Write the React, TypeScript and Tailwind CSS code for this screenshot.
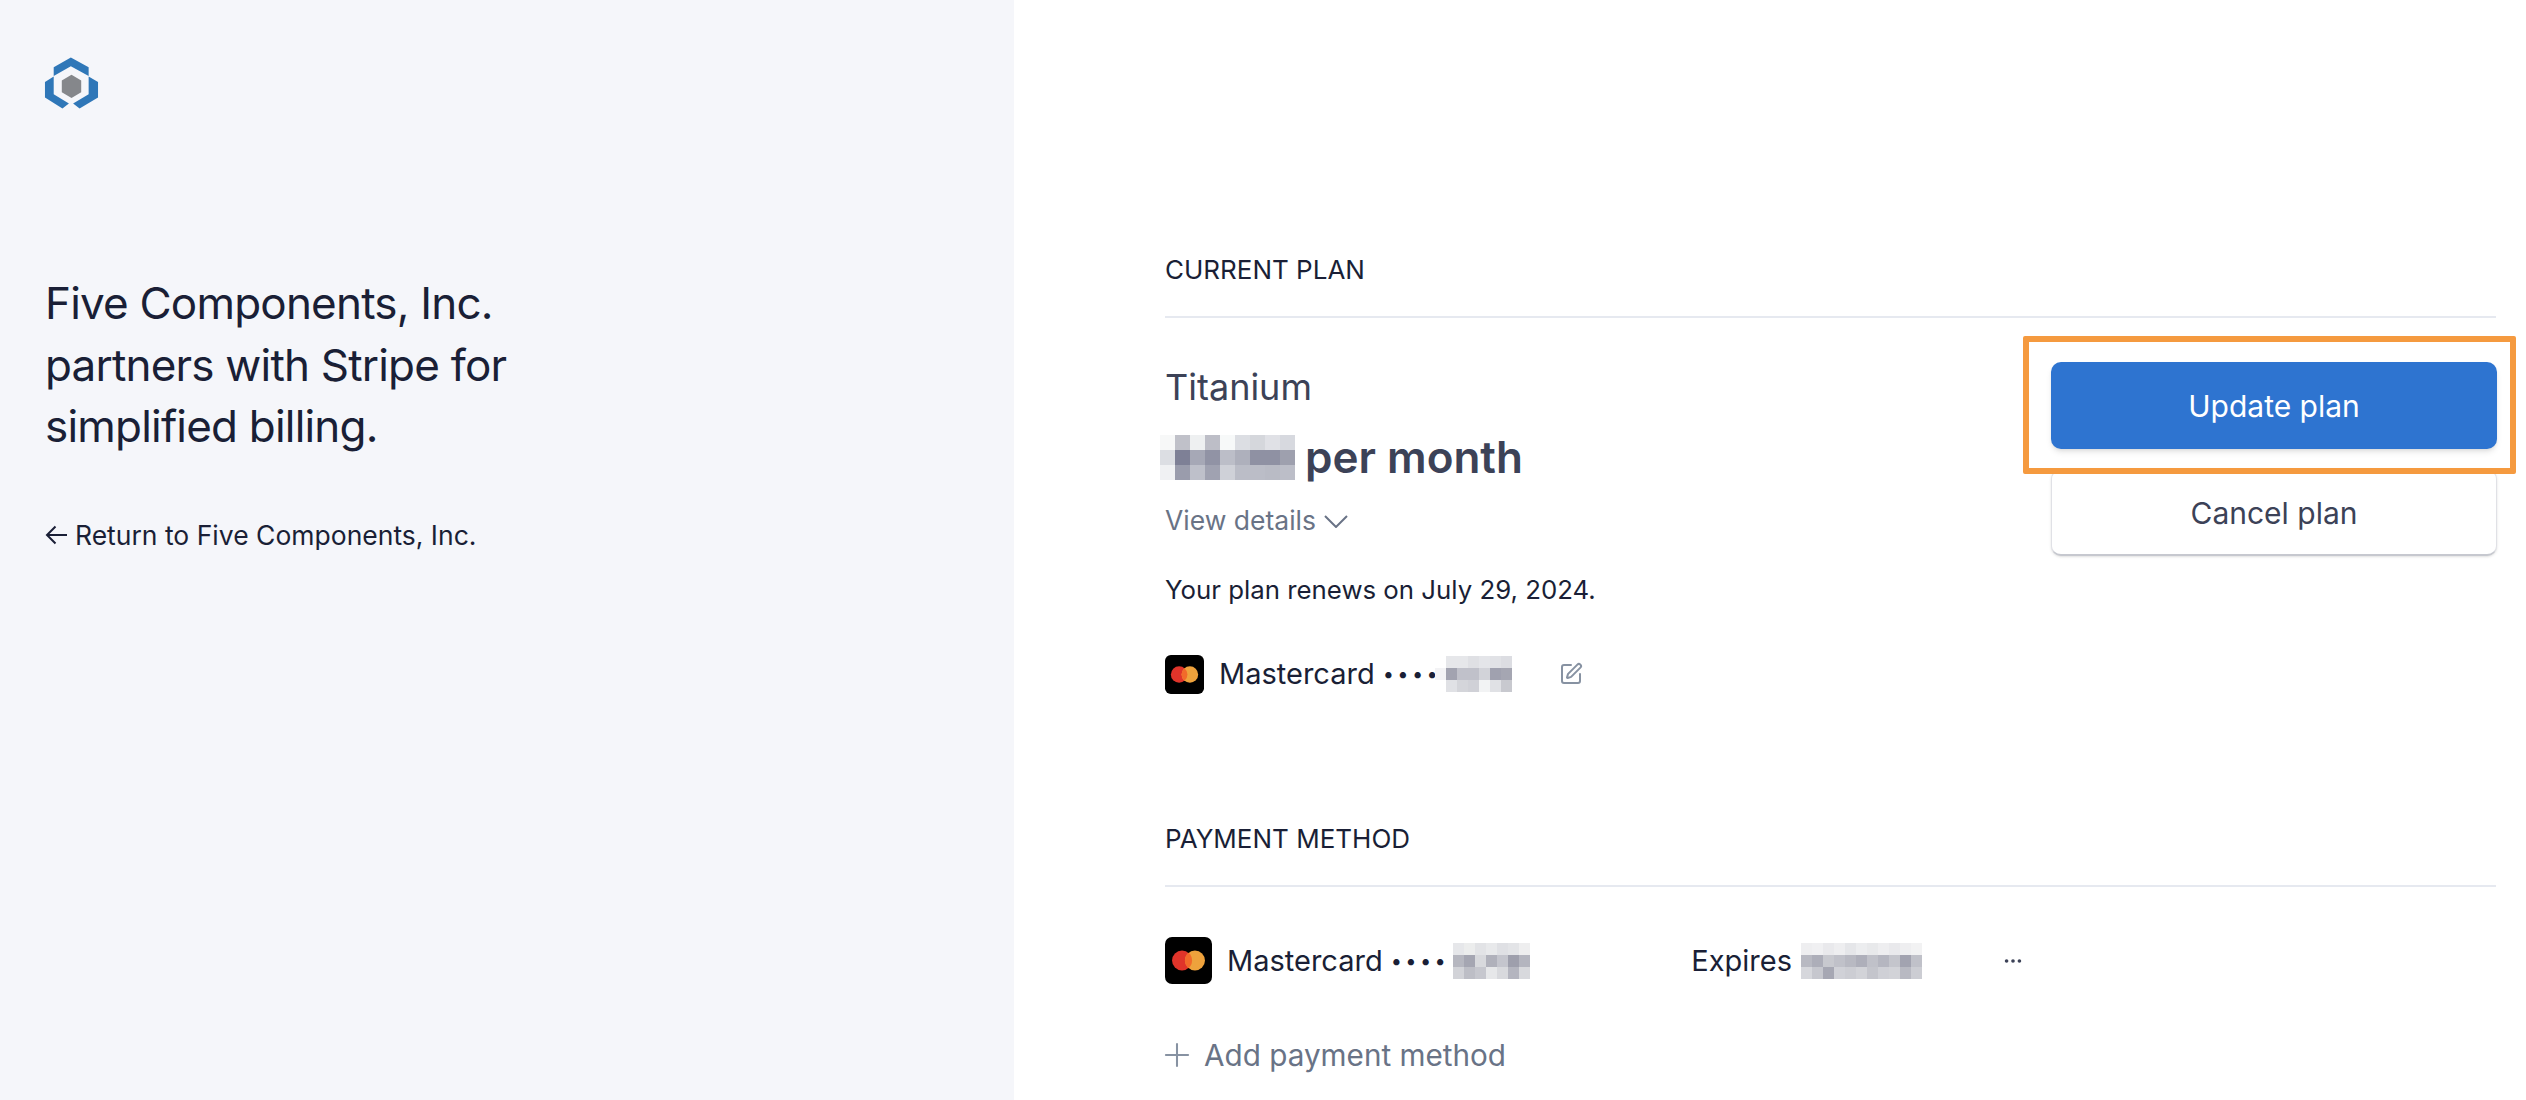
import { Ellipsis, Plus, SquarePen } from "lucide-react";

const font = "font-['Inter','Liberation_Sans',sans-serif]";

const priceBlur = [
  ["#f7f8f8", "#c0c1c9", "#eef0f1", "#bdbec7", "#f7f9f9", "#dcdee3", "#d5d7dc", "#e0e1e6", "#d7d9df"],
  ["#dcdee3", "#7e8096", "#a6a8b6", "#9193a5", "#bcbec8", "#aeb0bc", "#8f91a3", "#8f91a3", "#9ea0ae"],
  ["#f0f1f3", "#9a9cac", "#bec0ca", "#a0a2b1", "#cfd1d8", "#bbbdc7", "#bbbdc7", "#b9bbc5", "#bcbec8"],
];

const planCardBlur = [
  ["#ffffff", "#e6e7ea", "#e6e7ea", "#dfe0e4", "#e4e5e9", "#e1e2e6", "#dcdde2"],
  ["#f3f3f5", "#a2a3b0", "#c0c1ca", "#c0c1ca", "#d2d3d9", "#a0a1af", "#a5a6b2"],
  ["#ffffff", "#e0e1e5", "#d4d5da", "#d0d1d7", "#f2f3f4", "#e0e1e5", "#c8c9cf"],
];

const methodCardBlur = [
  ["#e6e7ea", "#eceded", "#e2e3e6", "#e8e9eb", "#dfe0e4", "#e3e4e7", "#eeeeef"],
  ["#b6b7c0", "#a5a6b2", "#d8d9dd", "#b0b1bb", "#c4c5cd", "#9e9fac", "#b4b5bf"],
  ["#d2d3d8", "#bdbec6", "#c6c7ce", "#e6e7e9", "#d8d9dd", "#b4b5bf", "#d8d9dd"],
];

const expiresBlur = [
  ["#eeeef0", "#f0f0f2", "#e9e9ec", "#eeeef0", "#e5e6e9", "#ecedef", "#e8e9eb", "#eeeef0", "#e9e9ec", "#eeeef0", "#f2f2f3"],
  ["#b8b9c2", "#adaeb9", "#c8c9cf", "#c0c1c9", "#b8b9c2", "#aeafba", "#c0c1c9", "#b5b6c0", "#c4c5cc", "#a2a3b0", "#c0c1c9"],
  ["#d6d7dc", "#c6c7ce", "#a6a7b3", "#d0d1d7", "#cccdd3", "#d2d3d8", "#c4c5cc", "#cfd0d6", "#d2d3d8", "#b8b9c2", "#cccdd3"],
];

const Mosaic = ({ rows, cell, height, className }: { rows: string[][]; cell: number; height: number; className?: string }) => (
  <div className={`flex flex-col shrink-0 ${className ?? ""}`}>
    {rows.map((row, r) => (
      <div className="flex" key={r}>
        {row.map((color, c) => (
          <div key={c} style={{ width: cell, height, backgroundColor: color }} />
        ))}
      </div>
    ))}
  </div>
);

const Mastercard = ({ className }: { className: string }) => (
  <svg className={`shrink-0 ${className}`} viewBox="0 0 40 40">
    <rect width="40" height="40" rx="6" fill="#000" />
    <circle cx="14.5" cy="20" r="8.5" fill="#e0342a" />
    <circle cx="25.5" cy="20" r="8.5" fill="#eea23c" />
    <path d="M20 13.5a8.5 8.5 0 0 1 0 13a8.5 8.5 0 0 1 0-13z" fill="#f26a2a" />
  </svg>
);

const Logo = () => (
  <svg className="w-[55px] h-[55px]" viewBox="70 50 170 170">
    <path d="M100 85L153 55L208 85V112L153 82L100 112Z" fill="#2f77b8" />
    <path d="M73 130L100 113V168L147 197L127 212L73 178Z" fill="#2f77b8" />
    <path d="M237 130L208 113V168L160 197L180 212L237 178Z" fill="#2f77b8" />
    <path d="M155 108L185 126V162L155 180L125 162V126Z" fill="#85878b" />
  </svg>
);

const SectionTitle = ({ children }: { children: string }) => (
  <div className="h-[66px] border-b-2 border-[#e6e9f0] text-[26px] leading-[36px] text-[#1a1f36]">{children}</div>
);

const CardNumberDots = () => (
  <span className="ml-[8px] -mr-[4px] text-[20px] leading-[40px] tracking-[3.4px] text-[#1a1f36]">••••</span>
);

export default function App() {
  return (
    <div className={`flex w-full h-[1100px] overflow-hidden bg-white ${font}`}>
      <aside className="w-[1014px] shrink-0 bg-[#f5f6fa] pl-[45px] pt-[56px] text-[#1a1f36]">
        <div className="-ml-[1px]">
          <Logo />
        </div>
        <h1 className="mt-[162px] w-[540px] text-[44px] leading-[61.5px] tracking-[-0.8px] font-normal">
          Five Components, Inc. partners with Stripe for simplified billing.
        </h1>
        <a className="mt-[59px] flex items-center gap-[8px] text-[26.5px] leading-[36px]">
          <svg className="w-[22px] h-[20px]" viewBox="0 0 22 20" fill="none" stroke="currentColor" strokeWidth="2">
            <path d="M22 10H2M10.5 1.5L2 10l8.5 8.5" />
          </svg>
          Return to Five Components, Inc.
        </a>
      </aside>

      <main className="flex-1 pl-[151px] pr-[30px] pt-[252px]">
        <SectionTitle>CURRENT PLAN</SectionTitle>

        <div className="flex justify-between h-[503px]">
          <div className="pt-[47px]">
            <div className="text-[36px] leading-[44px] text-[#3c4257]">Titanium</div>
            <div className="mt-[21px] flex items-center -ml-[5px] h-[54px]">
              <Mosaic rows={priceBlur} cell={15} height={15} />
              <span className="ml-[10px] text-[44px] leading-[54px] font-semibold text-[#3c4257]">per month</span>
            </div>
            <div className="mt-[18px] flex items-center gap-[8px] text-[26.5px] leading-[36px] text-[#697386]">
              View details
              <svg className="w-[24px] h-[13px] mt-[2px]" viewBox="0 0 24 13" fill="none" stroke="currentColor" strokeWidth="2">
                <path d="M1 1l11 11L23 1" />
              </svg>
            </div>
            <div className="mt-[34px] text-[25.8px] leading-[36px] text-[#1a1f36]">Your plan renews on July 29, 2024.</div>
            <div className="mt-[46px] flex items-center h-[40px]">
              <Mastercard className="w-[39px] h-[39px]" />
              <span className="ml-[15px] text-[29px] leading-[40px] text-[#1a1f36]">Mastercard</span>
              <CardNumberDots />
              <Mosaic rows={planCardBlur} cell={11} height={12} className="-ml-[2px]" />
              <SquarePen className="ml-[47px] w-[24px] h-[24px] text-[#8792a2]" strokeWidth={2} />
            </div>
          </div>

          <div className="w-[446px] -mr-[1px] pt-[44px] flex flex-col gap-[20px] text-[30px]">
            <div className="relative">
              <button className="w-full h-[87px] pt-[2px] rounded-[10px] bg-[#2e74d0] text-white shadow-md">Update plan</button>
              <div className="absolute -left-[28px] -right-[19px] -top-[26px] -bottom-[25px] border-[6px] rounded-[2px] border-[#f59a3f]" />
            </div>
            <button className="h-[87px] pt-[2px] rounded-[10px] bg-white text-[#3c4257] border border-[#e0e1e6] border-b-2 border-b-[#c6c8cf] shadow-sm">
              Cancel plan
            </button>
          </div>
        </div>

        <SectionTitle>PAYMENT METHOD</SectionTitle>

        <div className="mt-[50px] flex items-center h-[47px]">
          <Mastercard className="w-[47px] h-[47px]" />
          <span className="ml-[15px] text-[29px] leading-[40px] text-[#1a1f36]">Mastercard</span>
          <CardNumberDots />
          <Mosaic rows={methodCardBlur} cell={11} height={12} className="ml-[8px]" />
          <span className="ml-[161px] text-[29px] leading-[40px] text-[#1a1f36]">Expires</span>
          <Mosaic rows={expiresBlur} cell={11} height={12} className="ml-[9px]" />
          <Ellipsis className="ml-[80px] w-[22px] h-[22px] text-[#3c4257]" strokeWidth={2} />
        </div>

        <div className="mt-[51px] flex items-center h-[40px] text-[29.7px] text-[#697386]">
          <Plus className="w-[38px] h-[38px] -ml-[7px] text-[#8792a2]" strokeWidth={1.3} />
          <span className="ml-[8px]">Add payment method</span>
        </div>
      </main>
    </div>
  );
}
